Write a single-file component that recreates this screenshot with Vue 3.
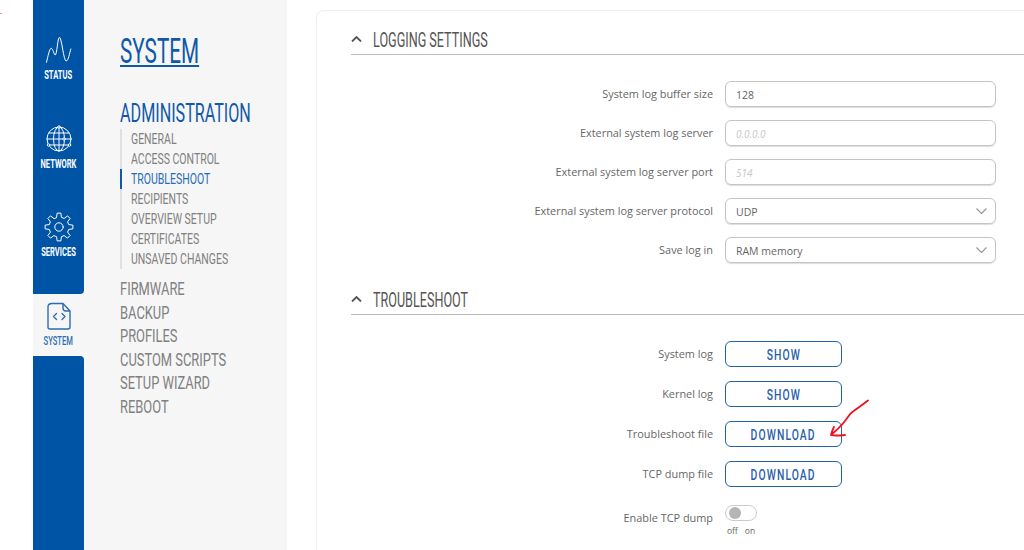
<script setup>
const sub = ['GENERAL', 'ACCESS CONTROL', 'TROUBLESHOOT', 'RECIPIENTS', 'OVERVIEW SETUP', 'CERTIFICATES', 'UNSAVED CHANGES']
const more = ['FIRMWARE', 'BACKUP', 'PROFILES', 'CUSTOM SCRIPTS', 'SETUP WIZARD', 'REBOOT']
const logging = [
  { label: 'System log buffer size', value: '128' },
  { label: 'External system log server', hint: '0.0.0.0' },
  { label: 'External system log server port', hint: '514' },
  { label: 'External system log server protocol', value: 'UDP', select: true },
  { label: 'Save log in', value: 'RAM memory', select: true },
]
const actions = [
  { label: 'System log', text: 'SHOW' },
  { label: 'Kernel log', text: 'SHOW' },
  { label: 'Troubleshoot file', text: 'DOWNLOAD' },
  { label: 'TCP dump file', text: 'DOWNLOAD' },
]
function gearPath() {
  const cx = 15, cy = 15, teeth = 8
  const pts = []
  for (let i = 0; i < teeth; i++) {
    const a = (i * 2 * Math.PI) / teeth - Math.PI / 2
    const s = Math.PI / teeth
    const add = (r, t) => pts.push(`${(cx + r * Math.cos(a + t)).toFixed(2)} ${(cy + r * Math.sin(a + t)).toFixed(2)}`)
    add(10, -s * 0.62)
    add(14, -s * 0.34)
    add(14, s * 0.34)
    add(10, s * 0.62)
  }
  return 'M' + pts.join('L') + 'Z'
}
const gear = gearPath()
</script>

<template>
  <div class="page">
    <i class="speck"></i>
    <nav class="rail">
      <div class="block top">
        <a class="item">
          <svg class="ico" viewBox="0 0 28 28"><path d="M1.5 26.3C3 20 4.6 12.3 6.2 12.3C8 12.3 9 19 10.2 19C12 19 12.6 1.3 14.5 1.3C16.6 1.3 18.6 25 21.2 25C23.4 25 24.6 17 25.8 13"/></svg>
          <span class="rl">STATUS</span>
        </a>
        <a class="item">
          <svg class="ico" viewBox="0 0 28 28"><circle cx="14" cy="14" r="12"/><ellipse cx="14" cy="14" rx="5.5" ry="12"/><path d="M14 2V26M2 14H26M4 8H24M4 20H24"/><circle class="node" cx="3.5" cy="20" r="1.2"/><circle class="node" cx="24.5" cy="20" r="1.2"/><circle class="node" cx="14" cy="2" r="1.2"/><circle class="node" cx="19" cy="14" r="1.2"/></svg>
          <span class="rl">NETWORK</span>
        </a>
        <a class="item last">
          <svg class="ico gear" viewBox="0 0 30 30"><path :d="gear"/><circle cx="15" cy="15" r="4.2"/></svg>
          <span class="rl">SERVICES</span>
        </a>
      </div>
      <a class="item current">
        <svg class="ico" viewBox="0 0 28 28"><path d="M7 1.5H18L25 9V25Q25 27 23 27H5Q3 27 3 25V5Q3 1.5 7 1.5ZM18 1.5V6Q18 9 21 9H25"/><path d="M11.5 11.5L8.5 14.5L11.5 17.5M17 11.5L20 14.5L17 17.5"/></svg>
        <span class="rl">SYSTEM</span>
      </a>
      <div class="block bottom"></div>
    </nav>

    <aside class="panel">
      <h1 class="title"><span>SYSTEM</span></h1>
      <h2 class="group"><span>ADMINISTRATION</span></h2>
      <ul class="sub">
        <li v-for="s in sub" :key="s" :class="{ on: s === 'TROUBLESHOOT' }"><span>{{ s }}</span></li>
      </ul>
      <ul class="more">
        <li v-for="m in more" :key="m"><span>{{ m }}</span></li>
      </ul>
    </aside>

    <main class="main">
      <section class="card">
        <header class="head">
          <svg class="up" viewBox="0 0 11 6"><path d="M1 5.5L5.5 1L10 5.5"/></svg>
          <span>LOGGING SETTINGS</span>
        </header>
        <div class="rows">
          <div v-for="r in logging" :key="r.label" class="row">
            <label>{{ r.label }}</label>
            <div class="field">
              <span v-if="r.value">{{ r.value }}</span>
              <em v-else>{{ r.hint }}</em>
              <svg v-if="r.select" class="down" viewBox="0 0 11 6"><path d="M.5 .5L5.5 5.5L10.5 .5"/></svg>
            </div>
          </div>
        </div>
        <header class="head second">
          <svg class="up" viewBox="0 0 11 6"><path d="M1 5.5L5.5 1L10 5.5"/></svg>
          <span>TROUBLESHOOT</span>
        </header>
        <div class="rows btns">
          <div v-for="a in actions" :key="a.label" class="row">
            <label>{{ a.label }}</label>
            <button class="btn" type="button"><span>{{ a.text }}</span></button>
          </div>
        </div>
        <div class="row toggle-row">
          <label>Enable TCP dump</label>
          <div class="toggle-wrap">
            <div class="toggle"><i></i></div>
            <div class="states"><span>off</span><span>on</span></div>
          </div>
        </div>
      </section>
    </main>

    <svg class="arrow" viewBox="0 0 50 50">
      <path d="M43 1.5C37 6 33 9 28 12.5C25 14.5 23 18 20 22C17 26 13 30 6 36C10 37 15 36.5 20 36M6 36C7 32 8 30 9 28"/>
    </svg>
  </div>
</template>

<style>
html, body { margin: 0; background: #fff; }
</style>

<style scoped>
.page {
  position: relative;
  display: flex;
  height: 550px;
  width: 1024px;
  padding-left: 33px;
  box-sizing: border-box;
  overflow: hidden;
  background: #fff;
  font-family: "Open Sans", "Liberation Sans", sans-serif;
}
.speck { position: absolute; left: 0; top: 13px; width: 2px; height: 1px; background: #f88; }

.rail { width: 51px; flex: none; display: flex; flex-direction: column; }
.block { background: #0054a6; }
.top { height: 294px; padding-top: 34px; box-sizing: border-box; border-bottom-right-radius: 4px; }
.bottom { flex: 1; border-top-right-radius: 4px; }
.item { display: flex; flex-direction: column; align-items: center; height: 88.5px; padding-top: 2px; box-sizing: border-box; color: #fff; }
.item.last { height: 80px; }
.current { height: 62px; padding-top: 7.5px; background: #f6f6f6; color: #2a6cb6; }
.ico { width: 28px; height: 28px; fill: none; stroke: currentColor; stroke-width: 1; stroke-linecap: round; stroke-linejoin: round; }
.ico .node { fill: #0054a6; }
.ico.gear { width: 30px; height: 30px; margin: -1px 0; }
.current .ico { stroke-width: 1.4; }
.rl { margin-top: 5px; font: 700 12px/12px Roboto, sans-serif; transform: scaleX(.63); white-space: nowrap; }
.current .rl { font-weight: 500; }

.panel { width: 203px; flex: none; padding: 33px 0 0 36px; box-sizing: border-box; background: #f6f6f6; }
.title, .group { margin: 0; font-weight: 400; color: #0f59a8; font-family: Roboto, sans-serif; }
.panel span { display: inline-block; transform-origin: left center; white-space: nowrap; }
.title { font-size: 35px; line-height: 38px; }
.title span { transform: scaleX(.592); text-decoration: underline; text-decoration-thickness: 2px; text-underline-offset: 2px; }
.group { margin-top: 30px; font-size: 25px; line-height: 26px; }
.group span { transform: scaleX(.646); }
.sub, .more { list-style: none; margin: 0; padding: 0; font-family: Roboto, sans-serif; color: #808080; }
.sub { margin-top: 2px; border-left: 2px solid #e0e0e0; font-size: 15px; line-height: 20px; }
.sub li { margin-left: -2px; border-left: 2px solid transparent; padding-left: 9px; }
.sub li span { transform: scaleX(.7); }
.sub li.on { border-left-color: #0f59a8; color: #2a6cb6; }
.more { margin-top: 9px; font-size: 18.5px; line-height: 23.6px; }
.more li span { transform: scaleX(.697); }

.main { flex: 1; min-width: 0; padding: 10px 0 0 29px; }
.card { border: 1px solid #eee; border-right: 0; border-bottom: 0; border-top-left-radius: 8px; padding-left: 34px; height: 100%; box-sizing: border-box; }
.head { display: flex; align-items: center; gap: 11px; height: 28px; margin-top: 14px; padding-bottom: 1px; border-bottom: 1px solid #bbb; color: #555; font: 400 20px/28px Roboto, sans-serif; }
.head span { display: inline-block; margin-top: 1px; transform: scaleX(.63); transform-origin: left center; white-space: nowrap; }
.head.second { margin-top: 22px; }
.up { width: 11px; height: 6px; margin-top: -1px; fill: none; stroke: #555; stroke-width: 1.8; }
.rows { display: flex; flex-direction: column; gap: 13px; margin-top: 26px; }
.btns { gap: 14px; }
.row { display: flex; align-items: center; gap: 12px; }
.row label { width: 362px; height: 26px; box-sizing: border-box; flex: none; text-align: right; font-size: 10.9px; color: #666; line-height: 26px; white-space: nowrap; }
.field { position: relative; width: 271px; height: 26px; box-sizing: border-box; border: 1px solid #c4c4c4; border-radius: 6px; padding: 1px 0 0 10px; display: flex; align-items: center; font-size: 10.5px; color: #666; box-shadow: 0 1px 1px #ddd; }
.field em { color: #c8c8c8; font-size: 10px; }
.down { position: absolute; right: 8px; top: 9px; width: 11px; height: 6px; fill: none; stroke: #999; stroke-width: 1.2; }
.btn { width: 117px; height: 26px; padding: 1px 0 0; background: #fff; border: 1.5px solid #1f63ad; border-radius: 6px; color: #2a5ea8; font: 500 15px/22px Roboto, sans-serif; letter-spacing: 1.6px; }
.btn span { display: inline-block; transform: scaleX(.69); white-space: nowrap; }
.toggle-row { margin-top: 18px; align-items: flex-start; }
.toggle-wrap { width: 40px; }
.toggle { width: 32px; height: 16px; box-sizing: border-box; border: 1px solid #ccc; border-radius: 8px; display: flex; align-items: center; padding-left: 3px; background: #fff; }
.toggle i { width: 12px; height: 12px; border-radius: 50%; background: #b5b5b5; }
.states { display: flex; gap: 7px; margin-top: 4px; padding-left: 2px; font-size: 8.5px; line-height: 12px; color: #666; }

.arrow { position: absolute; left: 825px; top: 399px; width: 50px; height: 50px; fill: none; stroke: #f01020; stroke-width: 1.8; stroke-linecap: round; stroke-linejoin: round; }
</style>
